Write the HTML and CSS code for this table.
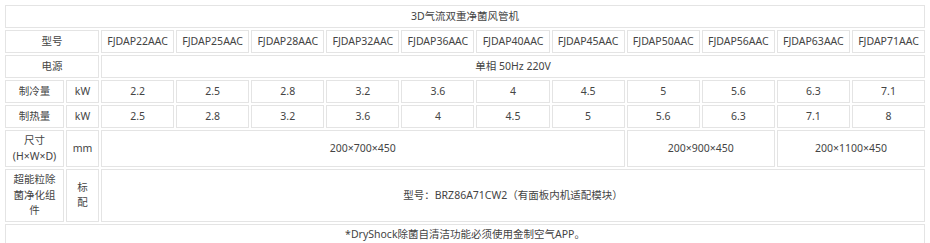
FILE: index.html
```html
<!DOCTYPE html>
<html lang="zh-CN">
<head>
<meta charset="utf-8">
<title>3D气流双重净菌风管机</title>
<link rel="stylesheet" href="styles.css">
</head>
<body>
<table class="spec">
  <colgroup>
    <col class="c-label"><col class="c-unit">
    <col class="c-m"><col class="c-m"><col class="c-m"><col class="c-m"><col class="c-m"><col class="c-m">
    <col class="c-m"><col class="c-m"><col class="c-m"><col class="c-m"><col class="c-m">
  </colgroup>
  <tbody>
    <tr class="row"><td colspan="13">3D气流双重净菌风管机</td></tr>
    <tr class="row">
      <td colspan="2">型号</td>
      <td>FJDAP22AAC</td><td>FJDAP25AAC</td><td>FJDAP28AAC</td><td>FJDAP32AAC</td><td>FJDAP36AAC</td><td>FJDAP40AAC</td>
      <td>FJDAP45AAC</td><td>FJDAP50AAC</td><td>FJDAP56AAC</td><td>FJDAP63AAC</td><td>FJDAP71AAC</td>
    </tr>
    <tr class="row"><td colspan="2">电源</td><td colspan="11">单相 50Hz 220V</td></tr>
    <tr class="row">
      <td>制冷量</td><td>kW</td>
      <td>2.2</td><td>2.5</td><td>2.8</td><td>3.2</td><td>3.6</td><td>4</td><td>4.5</td><td>5</td><td>5.6</td><td>6.3</td><td>7.1</td>
    </tr>
    <tr class="row">
      <td>制热量</td><td>kW</td>
      <td>2.5</td><td>2.8</td><td>3.2</td><td>3.6</td><td>4</td><td>4.5</td><td>5</td><td>5.6</td><td>6.3</td><td>7.1</td><td>8</td>
    </tr>
    <tr>
      <td>尺寸<br>(H×W×D)</td><td>mm</td>
      <td colspan="7">200×700×450</td><td colspan="2">200×900×450</td><td colspan="2">200×1100×450</td>
    </tr>
    <tr>
      <td>超能粒除<br>菌净化组<br>件</td><td>标<br>配</td>
      <td colspan="11">型号：BRZ86A71CW2（有面板内机适配模块）</td>
    </tr>
    <tr class="row"><td colspan="13">*DryShock除菌自清洁功能必须使用金制空气APP。</td></tr>
  </tbody>
</table>
</body>
</html>
```

FILE: styles.css
```css
html, body {
  margin: 0;
  padding: 0;
  background: #ffffff;
}

body {
  padding: 3px;
  font-family: "Noto Sans", "Noto Sans CJK SC", sans-serif;
  font-size: 10.5px;
  color: #444444;
}

.spec {
  width: 924px;
  table-layout: fixed;
  border-collapse: separate;
  border-spacing: 2px;
}

.c-label { width: 59px; }
.c-unit { width: 33px; }
.c-m { width: 73.1px; }

.spec td {
  border: 1px solid #e4e4e4;
  padding: 2px 1px;
  line-height: 15.5px;
  text-align: center;
  vertical-align: middle;
  overflow: hidden;
  white-space: nowrap;
}

.row {
  height: 23px;
}
```
